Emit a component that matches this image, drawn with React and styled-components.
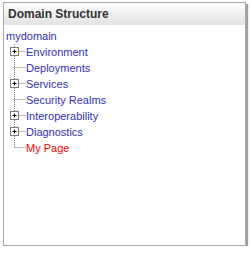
import React from "react";
import styled, { createGlobalStyle } from "styled-components";

const GlobalStyle = createGlobalStyle`
  html, body {
    margin: 0;
    padding: 0;
    background: #ffffff;
  }
  body {
    padding: 2px 0 0 3px;
    font-family: "Liberation Sans", Arial, sans-serif;
  }
`;

const nodes = [
  { label: "Environment", expandable: true },
  { label: "Deployments" },
  { label: "Services", expandable: true },
  { label: "Security Realms" },
  { label: "Interoperability", expandable: true },
  { label: "Diagnostics", expandable: true },
  { label: "My Page", current: true, last: true },
];

function Connector({ expandable, last }) {
  return (
    <Svg width="20" height="16" viewBox="0 0 20 16">
      <line
        x1="8.5"
        y1="0"
        x2="8.5"
        y2={last ? 8 : 16}
        stroke="#7d7d7d"
        strokeDasharray="1 1"
      />
      <line
        x1={expandable ? 12.5 : 8.5}
        y1="7.5"
        x2="20"
        y2="7.5"
        stroke="#7d7d7d"
        strokeDasharray="1 1"
      />
      {expandable && (
        <g>
          <rect x="4.5" y="3.5" width="8" height="8" fill="#fff" stroke="#7d7d7d" />
          <line x1="6.5" y1="7.5" x2="10.5" y2="7.5" stroke="#000" />
          <line x1="8.5" y1="5.5" x2="8.5" y2="9.5" stroke="#000" />
        </g>
      )}
    </Svg>
  );
}

export default function App() {
  return (
    <>
      <GlobalStyle />
      <Panel>
        <Header>Domain Structure</Header>
        <Tree>
          <Root>mydomain</Root>
          {nodes.map((n) => (
            <Row key={n.label}>
              <Connector expandable={n.expandable} last={n.last} />
              <Label $current={n.current}>{n.label}</Label>
            </Row>
          ))}
        </Tree>
      </Panel>
    </>
  );
}

const Panel = styled.div`
  width: 241px;
  height: 242px;
  border: 1px solid #a9a9a9;
  background: #fff;
  box-shadow: 2px 2px 1px #a0a0a0;
  display: flex;
  flex-direction: column;
`;

const Header = styled.div`
  height: 21px;
  line-height: 22px;
  padding-left: 4px;
  font-size: 12px;
  font-weight: bold;
  color: #333;
  background: linear-gradient(#fdfdfd 0%, #f3f3f3 40%, #e4e4e4 100%);
  border-bottom: 1px solid #e4e4e4;
`;

const Tree = styled.div`
  padding: 3px 0 0 2px;
  font-size: 11px;
`;

const Root = styled.div`
  height: 16px;
  line-height: 16px;
  color: #3131c4;
`;

const Row = styled.div`
  display: flex;
  align-items: center;
  height: 16px;
`;

const Svg = styled.svg`
  display: block;
  flex: none;
`;

const Label = styled.span`
  line-height: 16px;
  color: ${(p) => (p.$current ? "#ff0000" : "#3131c4")};
  white-space: nowrap;
`;
